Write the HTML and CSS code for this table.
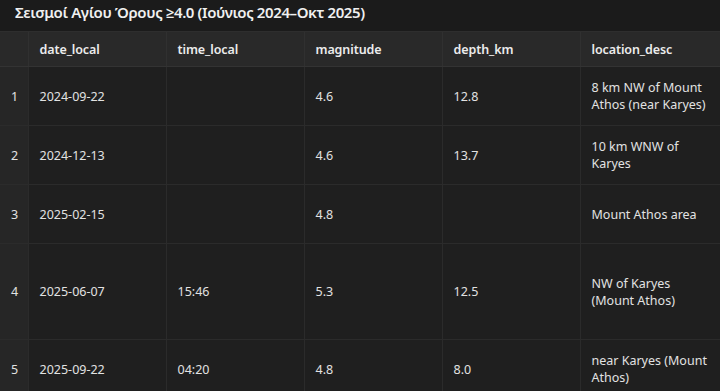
FILE: index.html
```
<!DOCTYPE html>
<html lang="el">
<head>
<meta charset="utf-8">
<title>Σεισμοί Αγίου Όρους</title>
<link rel="stylesheet" href="styles.css">
</head>
<body>
<div class="panel">
  <div class="title">Σεισμοί Αγίου Όρους ≥4.0 (Ιούνιος 2024–Οκτ 2025)</div>
  <table class="grid">
    <colgroup>
      <col class="c-idx"><col class="c-col"><col class="c-col"><col class="c-col"><col class="c-col"><col class="c-loc">
    </colgroup>
    <thead>
      <tr>
        <th class="idx"></th>
        <th>date_local</th>
        <th>time_local</th>
        <th>magnitude</th>
        <th>depth_km</th>
        <th>location_desc</th>
      </tr>
    </thead>
    <tbody>
      <tr class="r">
        <td class="idx">1</td><td>2024-09-22</td><td></td><td>4.6</td><td>12.8</td><td>8 km NW of Mount Athos (near Karyes)</td>
      </tr>
      <tr class="r">
        <td class="idx">2</td><td>2024-12-13</td><td></td><td>4.6</td><td>13.7</td><td>10 km WNW of Karyes</td>
      </tr>
      <tr class="r">
        <td class="idx">3</td><td>2025-02-15</td><td></td><td>4.8</td><td></td><td>Mount Athos area</td>
      </tr>
      <tr class="r tall">
        <td class="idx">4</td><td>2025-06-07</td><td>15:46</td><td>5.3</td><td>12.5</td><td>NW of Karyes (Mount Athos)</td>
      </tr>
      <tr class="r">
        <td class="idx">5</td><td>2025-09-22</td><td>04:20</td><td>4.8</td><td>8.0</td><td>near Karyes (Mount Athos)</td>
      </tr>
    </tbody>
  </table>
</div>
</body>
</html>
```
FILE: styles.css
```
html, body {
  margin: 0;
  padding: 0;
  background: #1f1f1f;
}
body {
  font-family: "Noto Sans", "Open Sans", sans-serif;
  color: #e6e6e6;
  overflow: hidden;
}
.panel {
  width: 720px;
}
.title {
  height: 31px;
  box-sizing: border-box;
  padding: 1px 0 0 15px;
  background: #1b1b1b;
  font-size: 15px;
  font-weight: 600;
  letter-spacing: -0.4px;
  line-height: 22px;
  color: #f0f0f0;
}
.grid {
  width: 720px;
  border-collapse: collapse;
  table-layout: fixed;
}
.c-idx { width: 28px; }
.c-col { width: 138px; }
.c-loc { width: 140px; }
.grid th {
  height: 34px;
  background: #292929;
  text-align: left;
  font-size: 12.5px;
  font-weight: 600;
  letter-spacing: -0.1px;
  color: #ececec;
  padding: 0 11px;
  border-left: 1px solid #303030;
  border-bottom: 1px solid #333333;
  border-top: 1px solid #2e2e2e;
}
.grid td {
  height: 58px;
  font-size: 12.5px;
  line-height: 17px;
  padding: 0 11px;
  vertical-align: middle;
  border-left: 1px solid #2b2b2b;
  border-bottom: 1px solid #2b2b2b;
  color: #e2e2e2;
}
.grid .tall td {
  height: 95px;
}
.grid .idx {
  background: #262626;
  border-left: none;
  padding: 0 0 0 11px;
}
.grid th.idx {
  background: #292929;
}
```
